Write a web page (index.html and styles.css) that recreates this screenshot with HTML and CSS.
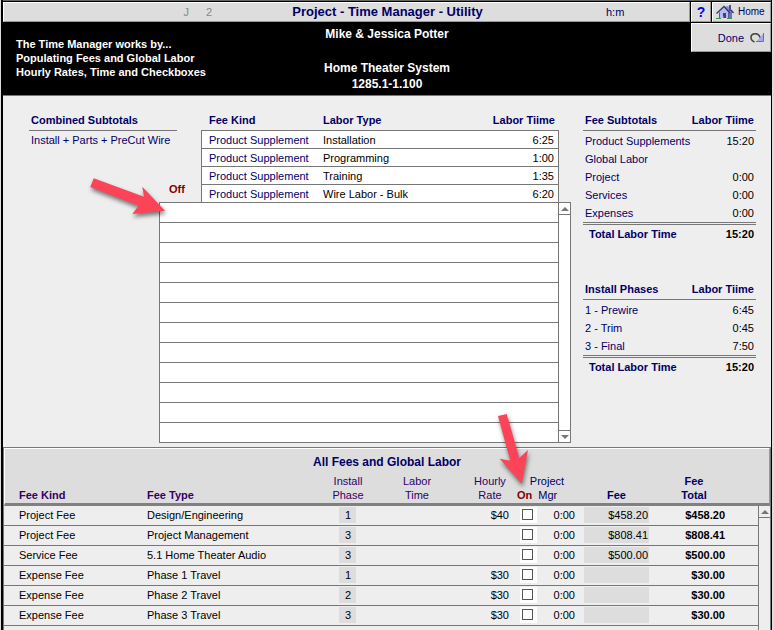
FILE: index.html
```html
<!DOCTYPE html>
<html lang="en">
<head>
<meta charset="utf-8">
<title>Project - Time Manager - Utility</title>
<link rel="stylesheet" href="styles.css">
</head>
<body>
<div class="window">
  <header class="topbar">
    <div class="titlebar">
      <div class="keys"><span>J</span><span>2</span></div>
      <h1>Project - Time Manager - Utility</h1>
      <span class="unit">h:m</span>
    </div>
    <button class="btn help" type="button">?</button>
    <button class="btn home" type="button">
      <svg width="18" height="15" viewBox="0 0 18 15" aria-hidden="true">
        <path d="M0 13h5v1H0zM11 13h5v1h-5z" fill="#2a9a4a"/>
        <path d="M3 7l5-5 5 5v6H3z" fill="#b8b8f8"/>
        <path d="M8 2l4-1 5 6-4 1z" fill="#8888d8"/>
        <path d="M13 7h3v6h-3z" fill="#7070b8"/>
        <path d="M13 0h2v6h-2z" fill="#50508c"/>
        <path d="M.5 8.500L8 1.500l6 6.500M15 5l2.500 3" fill="none" stroke="#383870" stroke-width="1.300"/>
        <path d="M3.500 7.500V13M12.500 7.500V13" stroke="#5a5a9a"/>
        <path d="M7 8h3v5H7z" fill="#404078"/><path d="M7 11h1v2H7z" fill="#e04040"/>
      </svg>
      Home
    </button>
  </header>

  <section class="banner">
    <p class="intro">The Time Manager works by...<br>Populating Fees and Global Labor<br>Hourly Rates, Time and Checkboxes</p>
    <div class="project">
      <p>Mike &amp; Jessica Potter</p>
      <p class="system">Home Theater System</p>
      <p>1285.1-1.100</p>
    </div>
    <button class="btn done" type="button">Done
      <svg width="14" height="10" viewBox="0 0 14 10" aria-hidden="true">
        <path d="M13 1v8H6z" fill="#a8a8f0"/>
        <path d="M13.500 0v8.500H6" fill="none" stroke="#707080"/>
        <path d="M4.500 9C0 7.500 0 2 3.500 1 7 0 9 1.500 10 4.500" fill="none" stroke="#444" stroke-width="1.500"/>
      </svg>
    </button>
  </section>

  <main class="summary">
    <section class="combined">
      <h2>Combined Subtotals</h2>
      <p>Install + Parts + PreCut Wire</p>
    </section>
    <span class="off">Off</span>
    <table class="labor">
      <thead><tr><th class="kind">Fee Kind</th><th>Labor Type</th><th class="num">Labor Tiime</th></tr></thead>
      <tbody>
        <tr><td>Product Supplement</td><td>Installation</td><td class="num">6:25</td></tr>
        <tr><td>Product Supplement</td><td>Programming</td><td class="num">1:00</td></tr>
        <tr><td>Product Supplement</td><td>Training</td><td class="num">1:35</td></tr>
        <tr><td>Product Supplement</td><td>Wire Labor - Bulk</td><td class="num">6:20</td></tr>
      </tbody>
    </table>
    <div class="list">
      <ul class="lines"><li></li><li></li><li></li><li></li><li></li><li></li><li></li><li></li><li></li><li></li><li></li><li></li></ul>
      <div class="scroll"><span class="step up"></span><span class="step down"></span></div>
    </div>
    <aside class="totals">
      <table>
        <thead><tr><th>Fee Subtotals</th><th class="num">Labor Tiime</th></tr></thead>
        <tbody>
          <tr><td>Product Supplements</td><td class="num">15:20</td></tr>
          <tr><td>Global Labor</td><td></td></tr>
          <tr><td>Project</td><td class="num">0:00</td></tr>
          <tr><td>Services</td><td class="num">0:00</td></tr>
          <tr><td>Expenses</td><td class="num">0:00</td></tr>
        </tbody>
        <tfoot><tr><th>Total Labor Time</th><td class="num">15:20</td></tr></tfoot>
      </table>
      <table>
        <thead><tr><th>Install Phases</th><th class="num">Labor Tiime</th></tr></thead>
        <tbody>
          <tr><td>1 - Prewire</td><td class="num">6:45</td></tr>
          <tr><td>2 - Trim</td><td class="num">0:45</td></tr>
          <tr><td>3 - Final</td><td class="num">7:50</td></tr>
        </tbody>
        <tfoot><tr><th>Total Labor Time</th><td class="num">15:20</td></tr></tfoot>
      </table>
    </aside>
  </main>

  <section class="fees">
    <h2>All Fees and Global Labor</h2>
    <table>
      <colgroup><col class="c-kind"><col><col class="c-phase"><col class="c-labor"><col class="c-rate"><col class="c-check"><col class="c-mgr"><col class="c-fee"><col class="c-total"><col class="c-scroll"></colgroup>
      <thead>
        <tr>
          <th class="kind">Fee Kind</th><th class="type">Fee Type</th>
          <th class="light">Install<br>Phase</th><th class="light">Labor<br>Time</th><th class="light">Hourly<br>Rate</th>
          <th class="manager" colspan="2"><span class="over">Project</span><span class="on">On</span><span>Mgr</span></th>
          <th>Fee</th><th class="sum">Fee<br>Total</th><th class="edge"></th>
        </tr>
      </thead>
      <tbody>
        <tr><td class="kind">Project Fee</td><td class="type">Design/Engineering</td><td><span class="phase">1</span></td><td></td><td class="rate">$40</td><td><label class="check"><input type="checkbox" aria-label="Project Mgr"></label></td><td class="mgr">0:00</td><td><span class="fee">$458.20</span></td><td class="total">$458.20</td>
          <td class="track" rowspan="7"><span class="step up"></span></td></tr>
        <tr><td class="kind">Project Fee</td><td class="type">Project Management</td><td><span class="phase">3</span></td><td></td><td class="rate"></td><td><label class="check"><input type="checkbox" aria-label="Project Mgr"></label></td><td class="mgr">0:00</td><td><span class="fee">$808.41</span></td><td class="total">$808.41</td></tr>
        <tr><td class="kind">Service Fee</td><td class="type">5.1 Home Theater Audio</td><td><span class="phase">3</span></td><td></td><td class="rate"></td><td><label class="check"><input type="checkbox" aria-label="Project Mgr"></label></td><td class="mgr">0:00</td><td><span class="fee">$500.00</span></td><td class="total">$500.00</td></tr>
        <tr><td class="kind">Expense Fee</td><td class="type">Phase 1 Travel</td><td><span class="phase">1</span></td><td></td><td class="rate">$30</td><td><label class="check"><input type="checkbox" aria-label="Project Mgr"></label></td><td class="mgr">0:00</td><td><span class="fee"></span></td><td class="total">$30.00</td></tr>
        <tr><td class="kind">Expense Fee</td><td class="type">Phase 2 Travel</td><td><span class="phase">2</span></td><td></td><td class="rate">$30</td><td><label class="check"><input type="checkbox" aria-label="Project Mgr"></label></td><td class="mgr">0:00</td><td><span class="fee"></span></td><td class="total">$30.00</td></tr>
        <tr><td class="kind">Expense Fee</td><td class="type">Phase 3 Travel</td><td><span class="phase">3</span></td><td></td><td class="rate">$30</td><td><label class="check"><input type="checkbox" aria-label="Project Mgr"></label></td><td class="mgr">0:00</td><td><span class="fee"></span></td><td class="total">$30.00</td></tr>
        <tr class="tail"><td colspan="9"></td></tr>
      </tbody>
    </table>
  </section>

  <svg class="arrow arrow-off" width="80" height="44" viewBox="0 0 80 44" aria-hidden="true">
    <path d="M9.700 3.300L60 21.700 58.300 11.700 81 35.700 48.300 39 54.700 30.700 6.300 12z"/>
  </svg>
  <svg class="arrow arrow-on" width="34" height="76" viewBox="0 0 34 76" aria-hidden="true">
    <path d="M6 3L14.700 1 27.300 45 36 37 29.700 70.700 7.700 45.700 18.300 47.700z"/>
  </svg>
</div>
</body>
</html>
```
FILE: styles.css
```css
* { box-sizing: border-box; }
body {
  margin: 0;
  background: #ddd;
  color: #000;
  font: 11px/14px "Liberation Sans", Arial, sans-serif;
}
h1, h2, p, ul { margin: 0; padding: 0; font-size: 11px; }
table { width: 100%; border-collapse: separate; border-spacing: 0; }
th, td { padding: 0; text-align: left; white-space: nowrap; }
.num { text-align: right; }

.window {
  position: relative;
  display: flex;
  flex-direction: column;
  min-height: 100vh;
  margin: 0 2px 0 1px;
  border-left: 2px solid #000;
  border-right: 1px solid #000;
  background: #eee;
}

/* Title row */
.topbar {
  display: flex;
  gap: 1px;
  height: 23px;
  padding: 1px 0;
  border-top: 1px solid #666;
  background: #000;
}
.titlebar, .btn {
  border: 1px solid #fff;
  border-right-color: #999;
  border-bottom-color: #999;
  background: #ddd;
}
.titlebar {
  flex: 1;
  display: grid;
  grid-template-columns: 208px 1fr 126px;
  align-items: center;
  color: #006;
}
.keys { display: flex; justify-content: flex-end; gap: 17px; color: #888; }
.titlebar h1 { font-size: 13px; text-align: center; white-space: nowrap; }
.unit { padding-left: 43px; }
.btn {
  display: flex;
  align-items: center;
  padding: 0;
  color: #006;
  font: 11px/14px "Liberation Sans", Arial, sans-serif;
}
.help { width: 20px; justify-content: center; color: #00f; font-size: 14px; font-weight: bold; }
.home { width: 59px; gap: 4px; padding-left: 3px; font-size: 10px; }

/* Banner */
.banner {
  display: grid;
  grid-template-columns: 1fr 1fr 1fr;
  height: 73px;
  border-bottom: 1px solid #777;
  background: #000;
  color: #fff;
  font-weight: bold;
}
.intro { padding: 14px 0 0 13px; white-space: nowrap; }
.project { padding-top: 3px; text-align: center; line-height: 16px; }
.project p { font-size: 12px; }
.system { margin-top: 18px; }
.done { justify-self: end; width: 80px; height: 29px; justify-content: flex-end; gap: 6px; padding-right: 6px; }

/* Summary area */
.summary {
  display: grid;
  grid-template-columns: 130px 42px 1fr 185px;
  grid-template-rows: auto auto;
  height: 351px;
  padding: 14px 15px 4px 26px;
  align-content: start;
  color: #006;
}
.summary h2, .summary thead th { height: 21px; font-weight: bold; vertical-align: middle; }
.combined { grid-column: 1; grid-row: 1; width: 148px; }
.combined h2 { padding: 3px 2px; border-bottom: 1px solid #777; }
.combined p { padding: 2px; }
.off { grid-column: 2; grid-row: 1; align-self: end; padding: 0 0 6px 10px; color: #800000; font-weight: bold; z-index: 1; }
.labor { grid-column: 3; grid-row: 1; width: calc(100% - 12px); table-layout: fixed; }
.labor th { border-bottom: 1px solid #777; padding: 0 4px 0 7px; }
.labor th.kind { width: 115px; padding-left: 8px; }
.labor td { height: 18px; padding: 0 4px 0 7px; border-bottom: 1px solid #777; background: #fff; color: #000; }
.labor td:first-child { border-left: 1px solid #777; color: #006; }
.labor td:last-child { border-right: 1px solid #777; }
.labor tr:last-child td { height: 17px; border-bottom: 0; }
.list { grid-column: 2 / 4; grid-row: 2; display: flex; border: 1px solid #777; background: #fff; }
.lines { flex: 1; list-style: none; }
.lines li { height: 20px; border-bottom: 1px solid #777; }
.lines li:last-child { height: 19px; border-bottom: 0; }
.scroll { display: flex; flex-direction: column; justify-content: space-between; width: 12px; border-left: 1px solid #777; }
.step { display: flex; align-items: center; justify-content: center; height: 12px; }
.step.up { border-bottom: 1px solid #777; }
.step.down { border-top: 1px solid #777; }
.step::before { content: ""; border: 4px solid transparent; }
.step.up::before { border-top: 0; border-bottom-color: #777; }
.step.down::before { border-bottom: 0; border-top-color: #777; }

.totals { grid-column: 4; grid-row: 1 / 3; display: grid; grid-template-columns: 100%; gap: 35px; align-content: start; margin: 0 0 0 12px; }
.totals table { table-layout: fixed; }
.totals th, .totals td { height: 18px; padding: 0 2px; }
.totals thead th { border-bottom: 1px solid #777; }
.totals thead .num { width: 70px; }
.totals tbody tr:first-child td { height: 19px; padding-top: 1px; }
.totals td.num { color: #000; }
.totals tfoot th, .totals tfoot td { height: 22px; padding-bottom: 2px; border-top: 3px double #777; font-weight: bold; }
.totals tfoot th { padding-left: 6px; }

/* Fee list */
.fees { flex: 1; border: 1px solid #777; border-bottom: 0; }
.fees h2 { height: 26px; padding-top: 6px; border-top: 1px solid #fff; border-left: 1px solid #fff; border-right: 1px solid #999; background: #ddd; color: #006; font-size: 12px; text-align: center; }
.fees table { table-layout: fixed; }
.c-kind { width: 133px; }
.c-phase { width: 42px; }
.c-labor { width: 96px; }
.c-rate { width: 50px; }
.c-check { width: 25px; }
.c-mgr { width: 41px; }
.c-fee { width: 71px; }
.c-total { width: 106px; }
.c-scroll { width: 12px; }
.fees th { height: 32px; padding-bottom: 1px; border-bottom: 3px solid #808080; background: #ddd; color: #006; text-align: center; vertical-align: bottom; }
.fees th.kind { border-left: 1px solid #fff; padding-left: 14px; text-align: left; color: #306; }
.fees th.type { text-align: left; padding-left: 10px; color: #306; }
.fees th.light { font-weight: normal; color: #306; }
.fees th.sum { padding-right: 22px; }
.fees th.edge { border-right: 1px solid #999; }
.fees th.manager { padding-left: 2px; text-align: left; font-weight: normal; }
.over { display: block; padding-right: 4px; text-align: center; }
.on { margin-right: 6px; color: #800000; font-weight: bold; }
.fees td { height: 20px; padding-bottom: 1px; border-bottom: 1px solid #777; }
.fees td.kind { padding-left: 15px; }
.fees td.type { padding-left: 10px; }
.fees td.rate, .fees td.mgr { padding-right: 6px; text-align: right; }
.fees td.total { padding-right: 33px; text-align: right; font-weight: bold; }
.phase { display: block; width: 17px; height: 16px; margin: 0 auto; background: #ddd; line-height: 16px; text-align: center; }
.check { display: flex; width: 17px; height: 16px; margin-left: 5px; padding: 2px 0 0 2px; background: #fff; }
.check input { appearance: none; width: 11px; height: 11px; margin: 0; border: 1px solid #555; background: #fff; }
.fee { display: block; height: 16px; margin: 0 3px; padding-right: 1px; background: #ddd; line-height: 16px; text-align: right; }
.fees td.track { padding: 0; border-left: 1px solid #777; border-bottom: 0; vertical-align: top; }
.fees .tail td { height: 4px; border-bottom: 0; }

/* Pointers laid over the page */
.arrow { position: absolute; overflow: visible; z-index: 2; fill: #fb4458; filter: drop-shadow(1px 3px 2px rgba(0, 0, 0, 0.5)); pointer-events: none; }
.arrow-off { left: 81px; top: 175px; }
.arrow-on { left: 489px; top: 413px; }
```
